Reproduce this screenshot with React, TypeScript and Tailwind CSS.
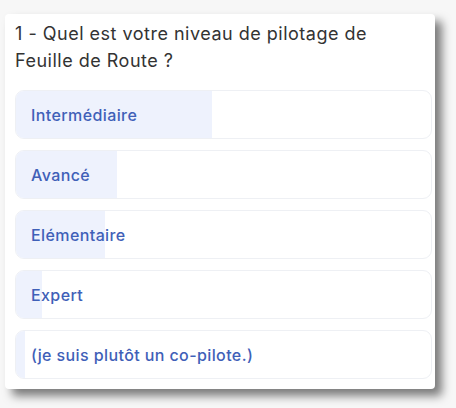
const options = [
  { label: "Intermédiaire", fill: 196 },
  { label: "Avancé", fill: 101 },
  { label: "Elémentaire", fill: 89 },
  { label: "Expert", fill: 26 },
  { label: "(je suis plutôt un co-pilote.)", fill: 9 },
];

export default function App() {
  return (
    <div className="h-[408px] w-[456px] bg-[#f7f7f7] pl-[5px] pt-[14px] font-['Inter',sans-serif]">
      <div className="w-[430px] rounded-sm bg-white pb-[10px] pl-[10px] pr-[3px] pt-[6px] shadow-[7px_7px_10px_rgba(0,0,0,0.5)]">
        <h2 className="pr-[40px] text-[18px] leading-[27px] tracking-[0.5px] text-[#333]">
          1 - Quel est votre niveau de pilotage de Feuille de Route ?
        </h2>
        <div className="mt-[16px] flex flex-col gap-[11px]">
          {options.map((o) => (
            <div
              key={o.label}
              className="relative h-[49px] overflow-hidden rounded-[9px] border border-[#eef0f4] bg-white"
            >
              <div
                className="absolute inset-y-0 left-0 bg-[#eef2fd]"
                style={{ width: o.fill }}
              />
              <span className="relative flex h-full items-center pl-[15px] text-[16px] font-medium tracking-[0.4px] text-[#3f60b8]">
                {o.label}
              </span>
            </div>
          ))}
        </div>
      </div>
    </div>
  );
}
